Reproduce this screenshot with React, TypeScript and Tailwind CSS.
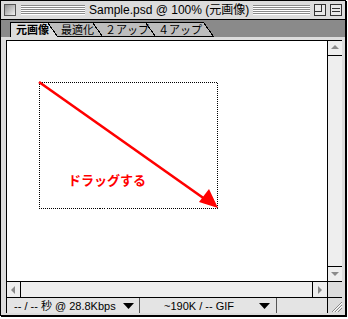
import React from "react";

const font = { fontFamily: '"Liberation Sans", "Noto Sans CJK JP", sans-serif' };
const cjk = { fontFamily: '"Noto Sans CJK JP", "Liberation Sans", sans-serif' };

function Tab({ label, active, w, z, pl }: { label: string; active?: boolean; w: number; z: number; pl: number }) {
  const h = 14;
  return (
    <div className="relative h-[15px] shrink-0" style={{ width: w, marginRight: -9, zIndex: z }}>
      <svg className="absolute inset-0" width={w + 1} height={h + 1} shapeRendering="crispEdges">
        <polygon
          points={`0.5,0.5 ${w - 9.5},0.5 ${w + 0.5},${h + 0.5} 0.5,${h + 0.5}`}
          fill={active ? "#dcdcdc" : "#bdbdbd"}
          stroke="#000"
          strokeWidth="1"
        />
        {active && <line x1="1" y1={h + 0.5} x2={w} y2={h + 0.5} stroke="#dcdcdc" strokeWidth="2" />}
      </svg>
      <span
        className={`relative block pt-[1px] text-[11px] leading-[13px] text-black whitespace-nowrap ${active ? "font-bold" : ""}`}
        style={{ ...cjk, paddingLeft: pl }}
      >
        {label}
      </span>
    </div>
  );
}

function Arrow({ dir }: { dir: "up" | "down" | "left" | "right" }) {
  const pts =
    dir === "up"
      ? "3,8 11,8 7,4"
      : dir === "down"
      ? "3,5 11,5 7,9"
      : dir === "left"
      ? "8,3 8,11 4,7"
      : "5,3 5,11 9,7";
  return (
    <svg width="14" height="14" className="block">
      <polygon points={pts} fill="#8a8a8a" />
    </svg>
  );
}

function Drop() {
  return (
    <svg width="11" height="6" className="block shrink-0">
      <polygon points="0,0 11,0 5.5,6" fill="#000" />
    </svg>
  );
}

export default function App() {
  const stripes =
    "bg-[repeating-linear-gradient(to_bottom,#8a8a8a_0px,#8a8a8a_1px,#ffffff_1px,#ffffff_2px)]";
  return (
    <div className="w-[348px] h-[319px] bg-white">
      <div className="w-[346px] h-[316px] border border-black bg-[#dcdcdc] shadow-[1px_1px_0_#000] flex flex-col">
        {/* title bar */}
        <div className="h-[19px] flex items-center border-b border-black bg-[#dcdcdc] shrink-0">
          <div className="ml-[3px] w-[12px] h-[12px] border border-[#555] bg-[linear-gradient(135deg,#909090,#f0f0f0)] shrink-0" />
          <div className={`ml-[5px] h-[10px] w-[64px] ${stripes}`} />
          <div className="mx-[4px] text-[12px] leading-[16px] text-black whitespace-nowrap" style={font}>
            Sample.psd @ 100% (元画像)
          </div>
          <div className={`flex-1 h-[10px] ${stripes}`} />
          <div className="ml-[4px] w-[12px] h-[12px] border border-[#333] bg-[#e8e8e8] relative shrink-0">
            <div className="absolute left-0 top-0 w-[7px] h-[7px] border-r border-b border-[#333]" />
          </div>
          <div className="ml-[4px] mr-[3px] w-[12px] h-[12px] border border-[#333] bg-[#e8e8e8] flex flex-col justify-center gap-[2px] px-[1px] shrink-0">
            <div className="h-px bg-[#333]" />
            <div className="h-px bg-[#333]" />
          </div>
        </div>
        {/* tabs */}
        <div className="h-[17px] bg-[#8a8a8a] flex items-end pl-[9px] shrink-0">
          <Tab label="元画像" active w={47} z={4} pl={6} />
          <Tab label="最適化" w={54} z={3} pl={13} />
          <Tab label="２アップ" w={62} z={2} pl={12} />
          <Tab label="４アップ" w={67} z={1} pl={12} />
        </div>
        <div className="h-[3px] bg-[#dcdcdc] shrink-0" />
        {/* body */}
        <div className="flex-1 flex flex-col pl-[5px] pr-[3px]">
          <div className="flex-1 flex border-t border-l border-black">
            <div className="flex-1 bg-white relative overflow-hidden">
              <svg className="absolute left-0 top-0" width="320" height="240">
                <rect
                  x="32.5"
                  y="41.5"
                  width="178"
                  height="126"
                  fill="none"
                  stroke="#000"
                  strokeWidth="1"
                  strokeDasharray="1 1"
                  shapeRendering="crispEdges"
                />
                <line x1="32" y1="41" x2="202" y2="161" stroke="#ff0000" strokeWidth="2.6" />
                <polygon points="211,167 192,161 202,148" fill="#ff0000" />
              </svg>
              <div className="absolute left-[61px] top-[131px] text-[13px] leading-[16px] font-bold text-[#ff0000]" style={cjk}>
                ドラッグする
              </div>
            </div>
            <div className="w-[15px] border-l border-black bg-[#eeeeee] flex flex-col justify-between">
              <div className="h-[15px] border-b border-black flex items-center justify-center">
                <Arrow dir="up" />
              </div>
              <div className="h-[15px] border-t border-black flex items-center justify-center">
                <Arrow dir="down" />
              </div>
            </div>
          </div>
          <div className="h-[16px] flex border-t border-l border-black shrink-0">
            <div className="w-[14px] border-r border-black bg-[#eeeeee] flex items-center justify-center">
              <Arrow dir="left" />
            </div>
            <div className="flex-1 bg-[#eeeeee]" />
            <div className="w-[15px] border-l border-black bg-[#eeeeee] flex items-center justify-center">
              <Arrow dir="right" />
            </div>
            <div className="w-[15px] border-l border-black bg-[#dcdcdc]" />
          </div>
          <div
            className="h-[16px] flex border-t border-l border-black bg-[#e4e4e4] shrink-0 text-[11px] leading-[14px] text-black whitespace-nowrap"
            style={font}
          >
            <div className="w-[133px] flex items-center justify-between pl-[7px] pr-[5px] border-r border-[#555]">
              <span>-- / -- 秒 @ 28.8Kbps</span>
              <Drop />
            </div>
            <div className="w-[137px] flex items-center justify-between pl-[24px] pr-[6px] border-r border-[#555]">
              <span>~190K / -- GIF</span>
              <Drop />
            </div>
            <div className="flex-1" />
            <div className="w-[15px] border-l border-black bg-[#dcdcdc] relative overflow-hidden">
              <svg width="15" height="15" className="absolute inset-0">
                <line x1="4" y1="14" x2="14" y2="4" stroke="#888" />
                <line x1="7" y1="14" x2="14" y2="7" stroke="#888" />
                <line x1="10" y1="14" x2="14" y2="10" stroke="#888" />
                <line x1="5" y1="14" x2="14" y2="5" stroke="#fff" />
                <line x1="8" y1="14" x2="14" y2="8" stroke="#fff" />
              </svg>
            </div>
          </div>
          <div className="h-[2px] shrink-0" />
        </div>
      </div>
    </div>
  );
}
